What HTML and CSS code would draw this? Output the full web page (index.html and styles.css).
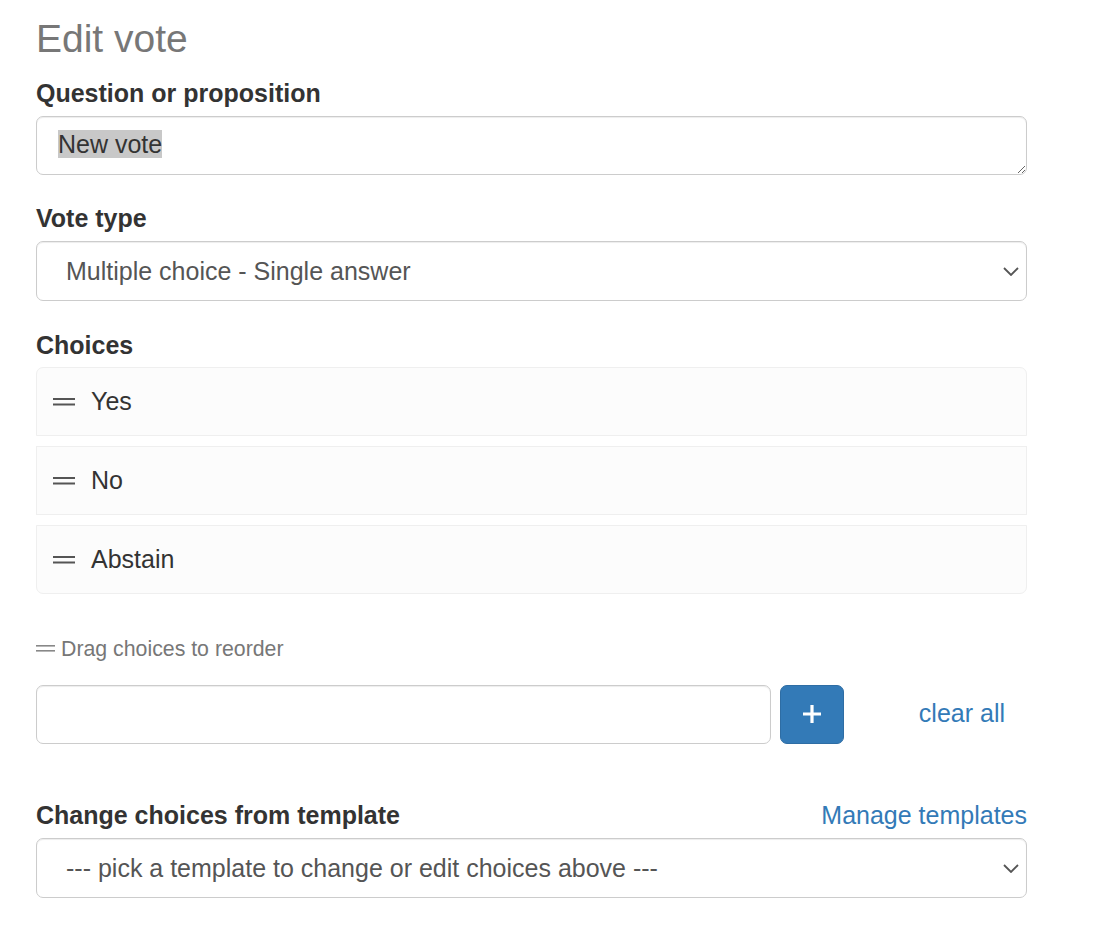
FILE: index.html
```html
<!DOCTYPE html>
<html lang="en">
<head>
<meta charset="utf-8">
<title>Edit vote</title>
<link rel="stylesheet" href="styles.css">
</head>
<body>
<div class="page">
  <h3 class="title">Edit vote</h3>

  <div class="form-group">
    <label class="label">Question or proposition</label>
    <div class="textarea"><span class="sel">New vote</span></div>
  </div>

  <div class="form-group">
    <label class="label">Vote type</label>
    <div class="select-wrap">
      <select class="select"><option>Multiple choice - Single answer</option></select>
      <svg class="chev" width="16" height="9" viewBox="0 0 16 9"><path d="M1 1 L8 8 L15 1" fill="none" stroke="#555" stroke-width="1.8"/></svg>
    </div>
  </div>

  <div class="choices-group">
    <label class="label">Choices</label>
    <ul class="choices">
      <li class="choice"><svg class="grip" width="22" height="8" viewBox="0 0 22 8"><rect x="0" y="0" width="22" height="2" fill="#555"/><rect x="0" y="5.5" width="22" height="2" fill="#555"/></svg><span>Yes</span></li>
      <li class="choice"><svg class="grip" width="22" height="8" viewBox="0 0 22 8"><rect x="0" y="0" width="22" height="2" fill="#555"/><rect x="0" y="5.5" width="22" height="2" fill="#555"/></svg><span>No</span></li>
      <li class="choice"><svg class="grip" width="22" height="8" viewBox="0 0 22 8"><rect x="0" y="0" width="22" height="2" fill="#555"/><rect x="0" y="5.5" width="22" height="2" fill="#555"/></svg><span>Abstain</span></li>
    </ul>
  </div>

  <p class="hint"><svg class="hint-grip" width="19" height="7" viewBox="0 0 19 7"><rect x="0" y="0" width="19" height="1.6" fill="#888"/><rect x="0" y="5" width="19" height="1.6" fill="#888"/></svg>Drag choices to reorder</p>

  <div class="add-row">
    <input class="input" type="text">
    <button class="btn-add" type="button"><svg width="20" height="20" viewBox="0 0 20 20"><path d="M10 1 V19 M1 10 H19" stroke="#fff" stroke-width="3.2" fill="none"/></svg></button>
    <a class="link clear" href="#">clear all</a>
  </div>

  <div class="template-group">
    <div class="label-row">
      <label class="label">Change choices from template</label>
      <a class="link" href="#">Manage templates</a>
    </div>
    <div class="select-wrap">
      <select class="select"><option>--- pick a template to change or edit choices above ---</option></select>
      <svg class="chev" width="16" height="9" viewBox="0 0 16 9"><path d="M1 1 L8 8 L15 1" fill="none" stroke="#555" stroke-width="1.8"/></svg>
    </div>
  </div>
</div>
</body>
</html>
```

FILE: styles.css
```css
* { box-sizing: border-box; }

body {
  margin: 0;
  background: #fff;
  font-family: "Liberation Sans", Arial, Helvetica, sans-serif;
  font-size: 25px;
  line-height: 35px;
  color: #333;
}

.page {
  width: 991px;
  margin-left: 36px;
  padding-top: 17.7px;
}

.title {
  margin: 0 0 15.8px;
  font-size: 39px;
  line-height: 42.9px;
  font-weight: 400;
  color: #777;
}

.label {
  display: block;
  font-weight: 700;
  font-size: 25px;
  line-height: 35px;
  margin-bottom: 4.6px;
  color: #333;
}

.form-group {
  margin-bottom: 26.5px;
}

.textarea {
  height: 59px;
  padding: 10.5px 21px;
  border: 1px solid #ccc;
  border-radius: 7px;
  box-shadow: inset 0 1px 1px rgba(0,0,0,.075);
  color: #555;
  resize: vertical;
  overflow: hidden;
}

.sel {
  background: #c8c8c8;
  color: #333;
}

.select-wrap {
  position: relative;
}

.select {
  display: block;
  width: 100%;
  height: 60px;
  padding: 0 40px 0 29px;
  border: 1px solid #ccc;
  border-radius: 7px;
  background: #fff;
  box-shadow: inset 0 1px 1px rgba(0,0,0,.075);
  font-family: inherit;
  font-size: 25px;
  color: #555;
  -webkit-appearance: none;
  appearance: none;
}

.chev {
  position: absolute;
  right: 8px;
  top: 50%;
  margin-top: -4px;
  pointer-events: none;
}

.choices {
  list-style: none;
  margin: 0;
  padding: 0;
  display: flex;
  flex-direction: column;
  gap: 10px;
}

.choice {
  display: flex;
  align-items: center;
  gap: 16px;
  height: 69px;
  padding: 0 16px;
  border: 1px solid #efefef;
  background: #fcfcfc;
  color: #333;
}

.choice:first-child {
  border-radius: 7px 7px 0 0;
}

.choice:last-child {
  border-radius: 0 0 7px 7px;
}

.grip {
  flex: none;
}

.hint {
  margin: 39.5px 0 21px;
  font-size: 21.3px;
  line-height: 30px;
  color: #777;
  display: flex;
  align-items: center;
  gap: 6px;
}

.hint-grip {
  flex: none;
  margin-top: -1px;
}

.add-row {
  display: flex;
  align-items: flex-start;
  height: 59.5px;
  margin-bottom: 54px;
}

.input {
  width: 735px;
  height: 59.5px;
  padding: 10.5px 21px;
  border: 1px solid #ccc;
  border-radius: 7px;
  box-shadow: inset 0 1px 1px rgba(0,0,0,.075);
  font-family: inherit;
  font-size: 25px;
  color: #555;
}

.btn-add {
  width: 64px;
  height: 59px;
  margin-left: 9px;
  border: 1px solid #2e6da4;
  border-radius: 7px;
  background: #337ab7;
  display: flex;
  align-items: center;
  justify-content: center;
  padding: 0;
}

.link {
  color: #337ab7;
  text-decoration: none;
  font-size: 25px;
  line-height: 35px;
}

.clear {
  margin-left: auto;
  margin-top: 11.5px;
  padding-right: 22px;
}

.label-row {
  display: flex;
  justify-content: space-between;
  align-items: flex-start;
  margin-bottom: 4.6px;
}

.label-row .label {
  margin-bottom: 0;
}
```
